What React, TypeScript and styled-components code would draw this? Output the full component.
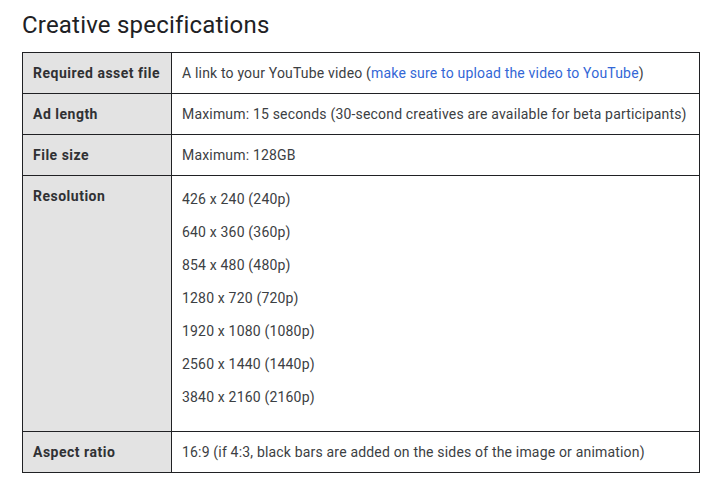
import React from "react";
import styled, { createGlobalStyle } from "styled-components";

const Global = createGlobalStyle`
  html, body { margin: 0; padding: 0; background: #fff; }
  body { font-family: Roboto, "Noto Sans", sans-serif; }
`;

const Page = styled.div`
  padding: 11px 28px 0 22px;
  width: 677px;
`;

const Title = styled.h2`
  margin: 0 0 13px 0;
  font-family: Roboto, "Open Sans", sans-serif;
  font-weight: 400;
  font-size: 24px;
  line-height: 28px;
  letter-spacing: 0.2px;
  color: #202124;
`;

const Table = styled.table`
  border-collapse: collapse;
  width: 678px;
  font-size: 14px;
  line-height: 20px;
  letter-spacing: 0.18px;
`;

const Label = styled.th`
  width: 128px;
  background: #e3e3e3;
  border: 1px solid #202124;
  padding: 10px 10px;
  text-align: left;
  vertical-align: top;
  font-weight: 700;
  letter-spacing: 0.5px;
  color: #303134;
`;

const Value = styled.td`
  border: 1px solid #202124;
  padding: 10px 10px;
  vertical-align: top;
  color: #3c4043;
`;

const Link = styled.a`
  color: #3367d6;
  text-decoration: none;
`;

const List = styled.div`
  display: flex;
  flex-direction: column;
  gap: 13px;
  padding: 3px 0 14px;
`;

const resolutions = [
  "426 x 240 (240p)",
  "640 x 360 (360p)",
  "854 x 480 (480p)",
  "1280 x 720 (720p)",
  "1920 x 1080 (1080p)",
  "2560 x 1440 (1440p)",
  "3840 x 2160 (2160p)",
];

export default function App() {
  return (
    <Page>
      <Global />
      <Title>Creative specifications</Title>
      <Table>
        <tbody>
          <tr>
            <Label>Required asset file</Label>
            <Value>
              A link to your YouTube video (<Link href="#">make sure to upload the video to YouTube</Link>)
            </Value>
          </tr>
          <tr>
            <Label>Ad length</Label>
            <Value>Maximum: 15 seconds (30-second creatives are available for beta participants)</Value>
          </tr>
          <tr>
            <Label>File size</Label>
            <Value>Maximum: 128GB</Value>
          </tr>
          <tr>
            <Label>Resolution</Label>
            <Value>
              <List>
                {resolutions.map((r) => (
                  <div key={r}>{r}</div>
                ))}
              </List>
            </Value>
          </tr>
          <tr>
            <Label>Aspect ratio</Label>
            <Value>16:9 (if 4:3, black bars are added on the sides of the image or animation)</Value>
          </tr>
        </tbody>
      </Table>
    </Page>
  );
}
